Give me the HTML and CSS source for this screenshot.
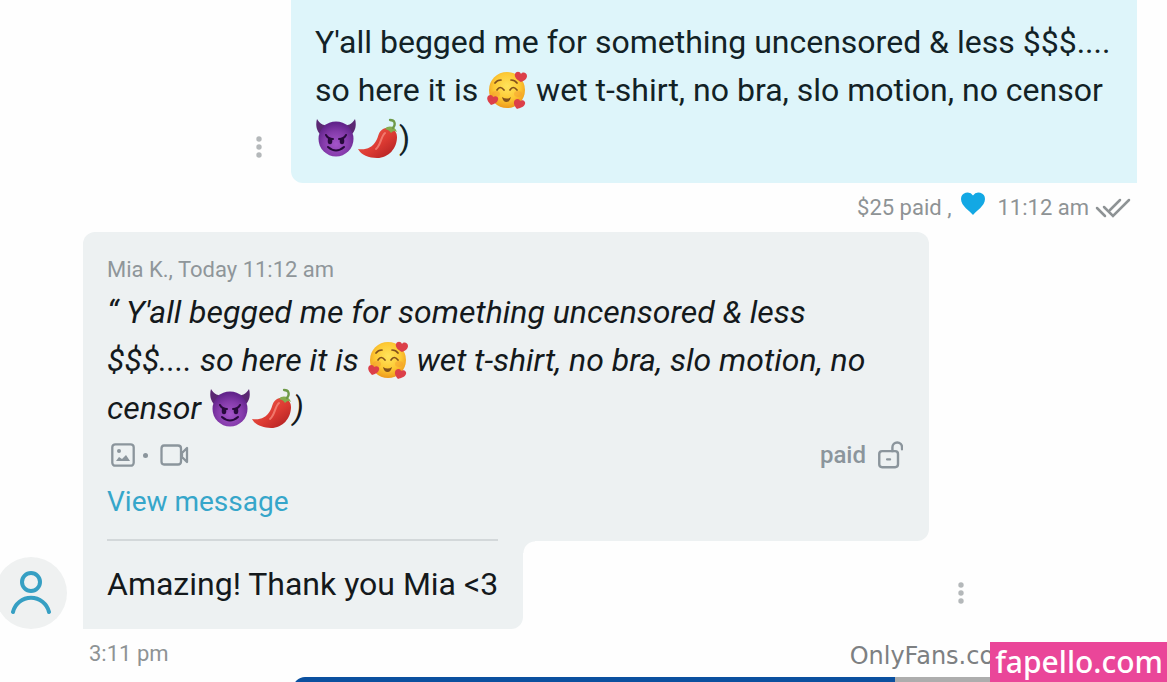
FILE: index.html
```html
<!DOCTYPE html>
<html lang="en">
<head>
<meta charset="utf-8">
<meta name="viewport" content="width=device-width, initial-scale=1">
<title>Messages</title>
<link rel="stylesheet" href="styles.css">
</head>
<body>
<svg class="sprite" aria-hidden="true">
  <defs>
    <radialGradient id="gold" cx="50%" cy="40%" r="60%">
      <stop offset="0" stop-color="#ffe45c"/><stop offset=".6" stop-color="#fdc934"/><stop offset="1" stop-color="#ee9a1c"/>
    </radialGradient>
    <radialGradient id="violet" cx="50%" cy="65%" r="60%">
      <stop offset="0" stop-color="#a455c9"/><stop offset=".6" stop-color="#853bab"/><stop offset="1" stop-color="#62248b"/>
    </radialGradient>
    <linearGradient id="chili" x1="0" y1="0" x2="1" y2="1">
      <stop offset="0" stop-color="#f0604f"/><stop offset=".55" stop-color="#dc3a32"/><stop offset="1" stop-color="#a81c20"/>
    </linearGradient>
  </defs>
  <symbol id="heart" viewBox="0 0 24 24">
    <path d="M12 23C9 19 0 14 0 7a6.500 6.500 0 0 1 12-3.500A6.500 6.500 0 0 1 24 7c0 7-9 12-12 16z"/>
  </symbol>
  <symbol id="love" viewBox="0 0 40 40">
    <circle cx="20" cy="20" r="18" fill="url(#gold)"/>
    <g fill="none" stroke="#82501b" stroke-width="1.700" stroke-linecap="round">
      <path d="M8 13q2-3 6-3M24 10q4 0 6 3M10 20q3-5 7 0M23 20q3-5 7 0"/>
    </g>
    <path d="M15 27q5 3 9 0q-1 5-4.500 5T15 27z" fill="#82501b"/>
    <g fill="#f39a30" opacity=".45"><ellipse cx="9" cy="24" rx="4" ry="3"/><ellipse cx="31" cy="24" rx="4" ry="3"/></g>
    <g fill="#dc3f49">
      <path d="M34 12c-4-2-7-5-6-8 1-3 5-3 6 0 2-3 6-1 6 2 0 3-3 5-6 6z"/>
      <path d="M4 35c-3-3-5-6-3-9 2-2 5-1 5 1 3-2 6 0 5 3-1 3-4 4-7 5z"/>
      <path d="M30 39c-3-3-4-7-2-9 2-2 5-1 5 1 3-2 6 1 5 3-1 3-5 4-8 5z"/>
    </g>
  </symbol>
  <symbol id="devil" viewBox="0 0 40 40">
    <path d="M1 1c-2 7 0 14 6 17l8-10C8 8 4 6 1 1zM39 1c2 7 0 14-6 17L25 8c7 0 11-2 14-7z" fill="#5b2873"/>
    <circle cx="20" cy="21" r="17.500" fill="url(#violet)"/>
    <g fill="none" stroke="#280a3c" stroke-linecap="round" stroke-width="2">
      <path d="M10 17q2 4 7 4M30 17q-2 4-7 4M12 29q8 7 16 0"/>
    </g>
    <g fill="#280a3c"><ellipse cx="14" cy="23" rx="2.300" ry="3.200"/><ellipse cx="26" cy="23" rx="2.300" ry="3.200"/></g>
  </symbol>
  <symbol id="pepper" viewBox="0 0 40 40">
    <path d="M25 11c6-3 14 0 14 8 0 11-8 21-20 21C11 40 3 37 0 31c8 1 14-1 18-8 3-5 2-9 7-12z" fill="url(#chili)"/>
    <path d="M27 15c-4 3-4 12-9 16" fill="none" stroke="#f99184" stroke-width="2" stroke-linecap="round" opacity=".7"/>
    <path d="M27 11c3-4 10-3 12 3-3-2-4-1-6 1-2-3-3-3-6-4z" fill="#86ab4e"/>
    <path d="M35 10c3-4 2-8-3-8" fill="none" stroke="#6e9a48" stroke-width="2.300" stroke-linecap="round"/>
  </symbol>
  <symbol id="dots" viewBox="0 0 6 22">
    <circle cx="3" cy="3" r="2.700"/><circle cx="3" cy="11" r="2.700"/><circle cx="3" cy="19" r="2.700"/>
  </symbol>
</svg>

<main class="chat">
  <section class="sent">
    <button class="more more-sent" aria-label="Message options"><svg class="dots"><use href="#dots"/></svg></button>
    <div class="bubble bubble-sent">
      <p class="text">Y'all begged me for something uncensored &amp; less $$$....<br>so here it is <svg class="emoji"><use href="#love"/></svg> wet t-shirt, no bra, slo motion, no censor<br><svg class="emoji"><use href="#devil"/></svg><svg class="emoji"><use href="#pepper"/></svg>)</p>
    </div>
  </section>
  <div class="status">
    <span>$25 paid ,</span>
    <svg class="heart"><use href="#heart"/></svg>
    <span>11:12 am</span>
    <svg class="checks" viewBox="0 0 36 22"><path d="M2 11l8 8M25 3L15 13M9 10l9 9L34 3" fill="none" stroke="currentColor" stroke-width="2.500" stroke-linecap="round"/></svg>
  </div>

  <section class="received">
    <div class="avatar"><svg viewBox="0 0 40 44" class="person"><g fill="none" stroke="#369fc3" stroke-width="4" stroke-linecap="round"><circle cx="20" cy="11" r="9"/><path d="M2 41a18.500 18.500 0 0 1 36 0"/></g></svg></div>
    <div class="thread">
      <article class="bubble quote">
        <p class="byline">Mia K., Today 11:12 am</p>
        <blockquote class="text quoted">“ Y'all begged me for something uncensored &amp; less<br>$$$.... so here it is <svg class="emoji"><use href="#love"/></svg> wet t-shirt, no bra, slo motion, no<br>censor <svg class="emoji"><use href="#devil"/></svg><svg class="emoji"><use href="#pepper"/></svg>)</blockquote>
        <div class="media">
          <svg class="photo" viewBox="0 0 24 24"><rect x="1.300" y="1.300" width="21.400" height="21.400" rx="3" fill="none" stroke="currentColor" stroke-width="2.300"/><circle cx="8" cy="8" r="2"/><path d="M5 18l3-4 3 2 4-4 4 6z"/></svg>
          <span class="bullet"></span>
          <svg class="video" viewBox="0 0 29 22"><path d="M4 1.500h14q3 0 3 3v13q0 3-3 3H4q-2.500 0-2.500-3v-13q0-3 2.500-3zM22 9l5-5v14l-5-5z" fill="none" stroke="currentColor" stroke-width="2.300" stroke-linejoin="round"/></svg>
          <span class="paid">paid</span>
          <svg class="lock" viewBox="0 0 26 28"><g fill="none" stroke="currentColor" stroke-width="2.500" stroke-linecap="round"><rect x="1.300" y="10" width="19.500" height="16.700" rx="3"/><path d="M15 10V6a5 5 0 0 1 10 0v2M9.500 18.500h3"/></g></svg>
        </div>
        <a class="view" href="#message">View message</a>
      </article>
      <div class="reply-row">
        <div class="reply"><p class="text">Amazing! Thank you Mia &lt;3</p></div>
        <button class="more more-reply" aria-label="Message options"><svg class="dots"><use href="#dots"/></svg></button>
      </div>
      <p class="time">3:11 pm</p>
    </div>
  </section>
  <div class="next"><div class="next-blue"></div><div class="next-photo"></div></div>
  <div class="marks"><span class="site">OnlyFans.co</span><span class="badge">fapello.com</span></div>
</main>
</body>
</html>
```
FILE: styles.css
```css
* { box-sizing: border-box; }
body {
  margin: 0;
  background: #fefefe;
  color: #14191c;
  font-family: Roboto, "Liberation Sans", sans-serif;
}
p, blockquote { margin: 0; }
button { border: 0; padding: 0; background: none; }
svg { flex: none; }
.sprite { position: absolute; width: 0; height: 0; }
.chat { position: relative; height: 100vh; overflow: hidden; }
.text { font-size: 32px; line-height: 48px; white-space: nowrap; }
.emoji { width: 40px; height: 40px; margin: 0 1px; vertical-align: -9px; }
.dots { display: block; width: 6px; height: 22px; fill: #b4b8ba; }

.sent { display: flex; align-items: flex-end; padding-right: 30px; }
.more-sent { margin: 0 29px 25px 256px; }
.bubble { flex: 1; padding: 18px 24px 21px; }
.bubble-sent { background: #def5fa; border-radius: 0 0 0 12px; color: #122226; }
.status {
  display: flex;
  align-items: center;
  justify-content: flex-end;
  height: 49px;
  padding-right: 36px;
  color: #8e9395;
  font-size: 22px;
}
.heart { width: 24px; height: 24px; margin: 0 12px 8px 10px; fill: #13a8e4; }
.checks { width: 36px; height: 22px; margin-left: 6px; }

.received { display: flex; align-items: flex-start; }
.avatar {
  display: flex;
  align-items: center;
  justify-content: center;
  align-self: flex-end;
  flex: none;
  width: 72px;
  height: 72px;
  margin: 0 16px 48px -5px;
  border-radius: 50%;
  background: #eff1f1;
}
.person { width: 40px; height: 44px; }
.thread { flex: 1; }
.quote {
  height: 309px;
  margin-right: 238px;
  padding: 24px 24px 0;
  border-radius: 12px 12px 12px 0;
  background: #edf1f2;
}
.byline { color: #8f969a; font-size: 22px; line-height: 28px; }
.quoted { padding-top: 4px; font-style: italic; }
.media {
  display: flex;
  align-items: center;
  height: 46px;
  padding: 0 2px 0 4px;
  color: #8b959c;
  fill: currentColor;
}
.photo { width: 24px; height: 24px; }
.bullet { width: 5px; height: 5px; margin: 0 12px 0 8px; border-radius: 50%; background: #8b959c; }
.video { width: 29px; height: 22px; }
.paid { margin: 0 12px 0 auto; font-size: 24px; font-weight: 500; }
.lock { width: 25px; height: 28px; }
.view { display: inline-block; color: #36a6ca; font-size: 28px; line-height: 48px; text-decoration: none; }
.reply-row { display: flex; align-items: center; margin-right: 200px; }
.reply {
  position: relative;
  padding: 0 25px 21px 24px;
  border-radius: 0 0 12px 0;
  background: #edf1f2;
}
.reply .text { margin-top: -2px; padding-top: 19px; border-top: 2px solid #d3d8da; }
.reply::after {
  content: "";
  position: absolute;
  top: 0;
  left: 100%;
  width: 12px;
  height: 12px;
  background: radial-gradient(circle at 12px 12px, #fefefe 11px, #edf1f2 12px);
}
.more-reply { margin: 16px 3px 0 auto; }
.time { padding: 9px 6px 0; color: #8e9395; font-size: 22px; line-height: 32px; height: 48px; }
.next {
  display: flex;
  height: 40px;
  margin-left: 293px;
  border-radius: 12px 0 0;
  overflow: hidden;
}
.next-blue { flex: 602; background: #0b509f; }
.next-photo { flex: 272; background: #adadad; }
.marks {
  position: absolute;
  right: 0;
  bottom: 0;
  display: flex;
  align-items: center;
}
.site { margin: 0 -4px 12px 0; color: #7d8082; font: 24px "DejaVu Sans", sans-serif; }
.badge {
  z-index: 1;
  padding: 0 4px 0 5px;
  background: #ea4699;
  color: #fff;
  font: 500 30px/40px "Noto Sans", sans-serif;
}
```
